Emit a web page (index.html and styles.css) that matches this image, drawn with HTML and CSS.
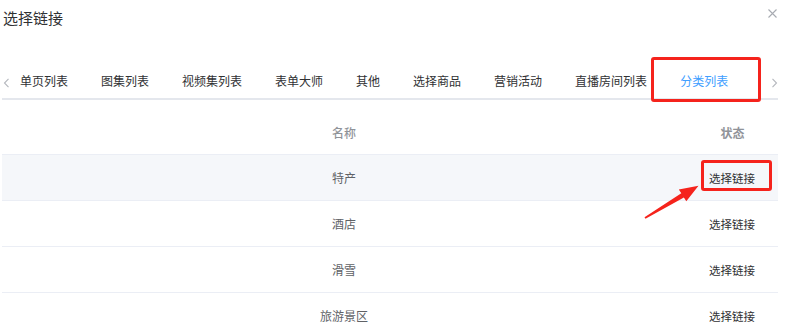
FILE: index.html
```html
<!DOCTYPE html>
<html lang="zh">
<head>
<meta charset="utf-8">
<title>选择链接</title>
<link rel="stylesheet" href="styles.css">
</head>
<body>
<div class="dialog">
  <div class="dialog-header">
    <span class="dialog-title">选择链接</span>
    <span class="dialog-close">
      <svg width="9" height="9" viewBox="0 0 9 9"><path d="M0.5 0.5 L8.5 8.5 M8.5 0.5 L0.5 8.5" stroke="#a8abb2" stroke-width="1.1" fill="none"/></svg>
    </span>
  </div>

  <div class="tabs">
    <span class="tabs-arrow">
      <svg width="7" height="10" viewBox="0 0 7 10"><path d="M5.5 0.8 L1.5 5 L5.5 9.2" stroke="#b4b7bd" stroke-width="1.1" fill="none"/></svg>
    </span>
    <div class="tabs-scroll">
      <div class="tab">单页列表</div>
      <div class="tab">图集列表</div>
      <div class="tab">视频集列表</div>
      <div class="tab">表单大师</div>
      <div class="tab">其他</div>
      <div class="tab">选择商品</div>
      <div class="tab">营销活动</div>
      <div class="tab">直播房间列表</div>
      <div class="tab active">分类列表</div>
    </div>
    <span class="tabs-arrow right">
      <svg width="7" height="10" viewBox="0 0 7 10"><path d="M1.5 0.8 L5.5 5 L1.5 9.2" stroke="#b4b7bd" stroke-width="1.1" fill="none"/></svg>
    </span>
    <div class="mark mark-tab"></div>
  </div>

  <div class="table">
    <div class="row head">
      <div class="cell name">名称</div>
      <div class="cell status">状态</div>
    </div>
    <div class="row hover">
      <div class="cell name">特产</div>
      <div class="cell status"><span class="link-btn">选择链接</span></div>
    </div>
    <div class="row">
      <div class="cell name">酒店</div>
      <div class="cell status"><span class="link-btn">选择链接</span></div>
    </div>
    <div class="row">
      <div class="cell name">滑雪</div>
      <div class="cell status"><span class="link-btn">选择链接</span></div>
    </div>
    <div class="row">
      <div class="cell name">旅游景区</div>
      <div class="cell status"><span class="link-btn">选择链接</span></div>
    </div>
    <div class="mark mark-btn"></div>
    <svg class="annot-arrow" width="788" height="333" viewBox="0 0 788 333">
      <polygon points="644.5,217.3 681.3,193.2 678.8,189.4 698.5,185.8 686.3,201.3 683.9,197.4 645.5,218.7" fill="#f5231c"/>
    </svg>
  </div>
</div>
</body>
</html>
```

FILE: styles.css
```css
* { box-sizing: border-box; }
html, body { margin: 0; padding: 0; background: #fff; }
body {
  font-family: "Noto Sans CJK SC", "Noto Sans", sans-serif;
  color: #303133;
  width: 788px;
  height: 333px;
  overflow: hidden;
}
.dialog { position: relative; width: 788px; }

.dialog-header {
  display: flex;
  justify-content: space-between;
  align-items: flex-start;
  height: 64px;
  padding: 7px 11px 0 3px;
}
.dialog-title { font-size: 15px; line-height: 22px; color: #303133; }
.dialog-close { display: block; margin-top: 2px; width: 9px; height: 9px; }
.dialog-close svg { display: block; }

.tabs {
  position: relative;
  display: flex;
  align-items: stretch;
  margin: 0 10px 0 2px;
  height: 36px;
  border-bottom: 2px solid #e4e7ed;
}
.tabs-arrow {
  width: 18px;
  display: flex;
  align-items: center;
  padding-left: 1px;
  padding-top: 4px;
}
.tabs-arrow.right { justify-content: flex-end; padding-right: 0; width: 30px; }
.tabs-scroll { display: flex; flex: 1; overflow: hidden; }
.tab {
  position: relative;
  font-size: 12px;
  line-height: 34px;
  padding: 0 16px 0 17px;
  white-space: nowrap;
  color: #303133;
}
.tab:first-child { padding-left: 0; }
.tab.active { color: #409eff; }
.tab.active::after {
  content: "";
  position: absolute;
  left: 17px;
  right: 17px;
  bottom: -2px;
  height: 2px;
  background: #409eff;
}

.mark {
  position: absolute;
  border: 3px solid #f5231c;
  border-radius: 3px;
}
.mark-tab { left: 649px; top: -7px; width: 110px; height: 45px; }

.table { position: relative; margin: 0 10px 0 2px; width: 776px; }
.row {
  display: flex;
  height: 46px;
  border-bottom: 1px solid #ebeef5;
  align-items: center;
  font-size: 12px;
}
.row.head { height: 55px; align-items: flex-start; padding-top: 24px; }
.row.hover { background: #f5f7fa; }
.cell { text-align: center; }
.cell.name { width: 684px; color: #606266; }
.cell.status { width: 92px; }
.head .cell { color: #909399; font-weight: 500; }
.head .cell.status { font-weight: 700; padding-left: 1px; }
.link-btn { color: #303133; font-size: 11.5px; }

.mark-btn { left: 699px; top: 60px; width: 71px; height: 31px; }
.annot-arrow { position: absolute; left: -2px; top: -100px; pointer-events: none; }
```
